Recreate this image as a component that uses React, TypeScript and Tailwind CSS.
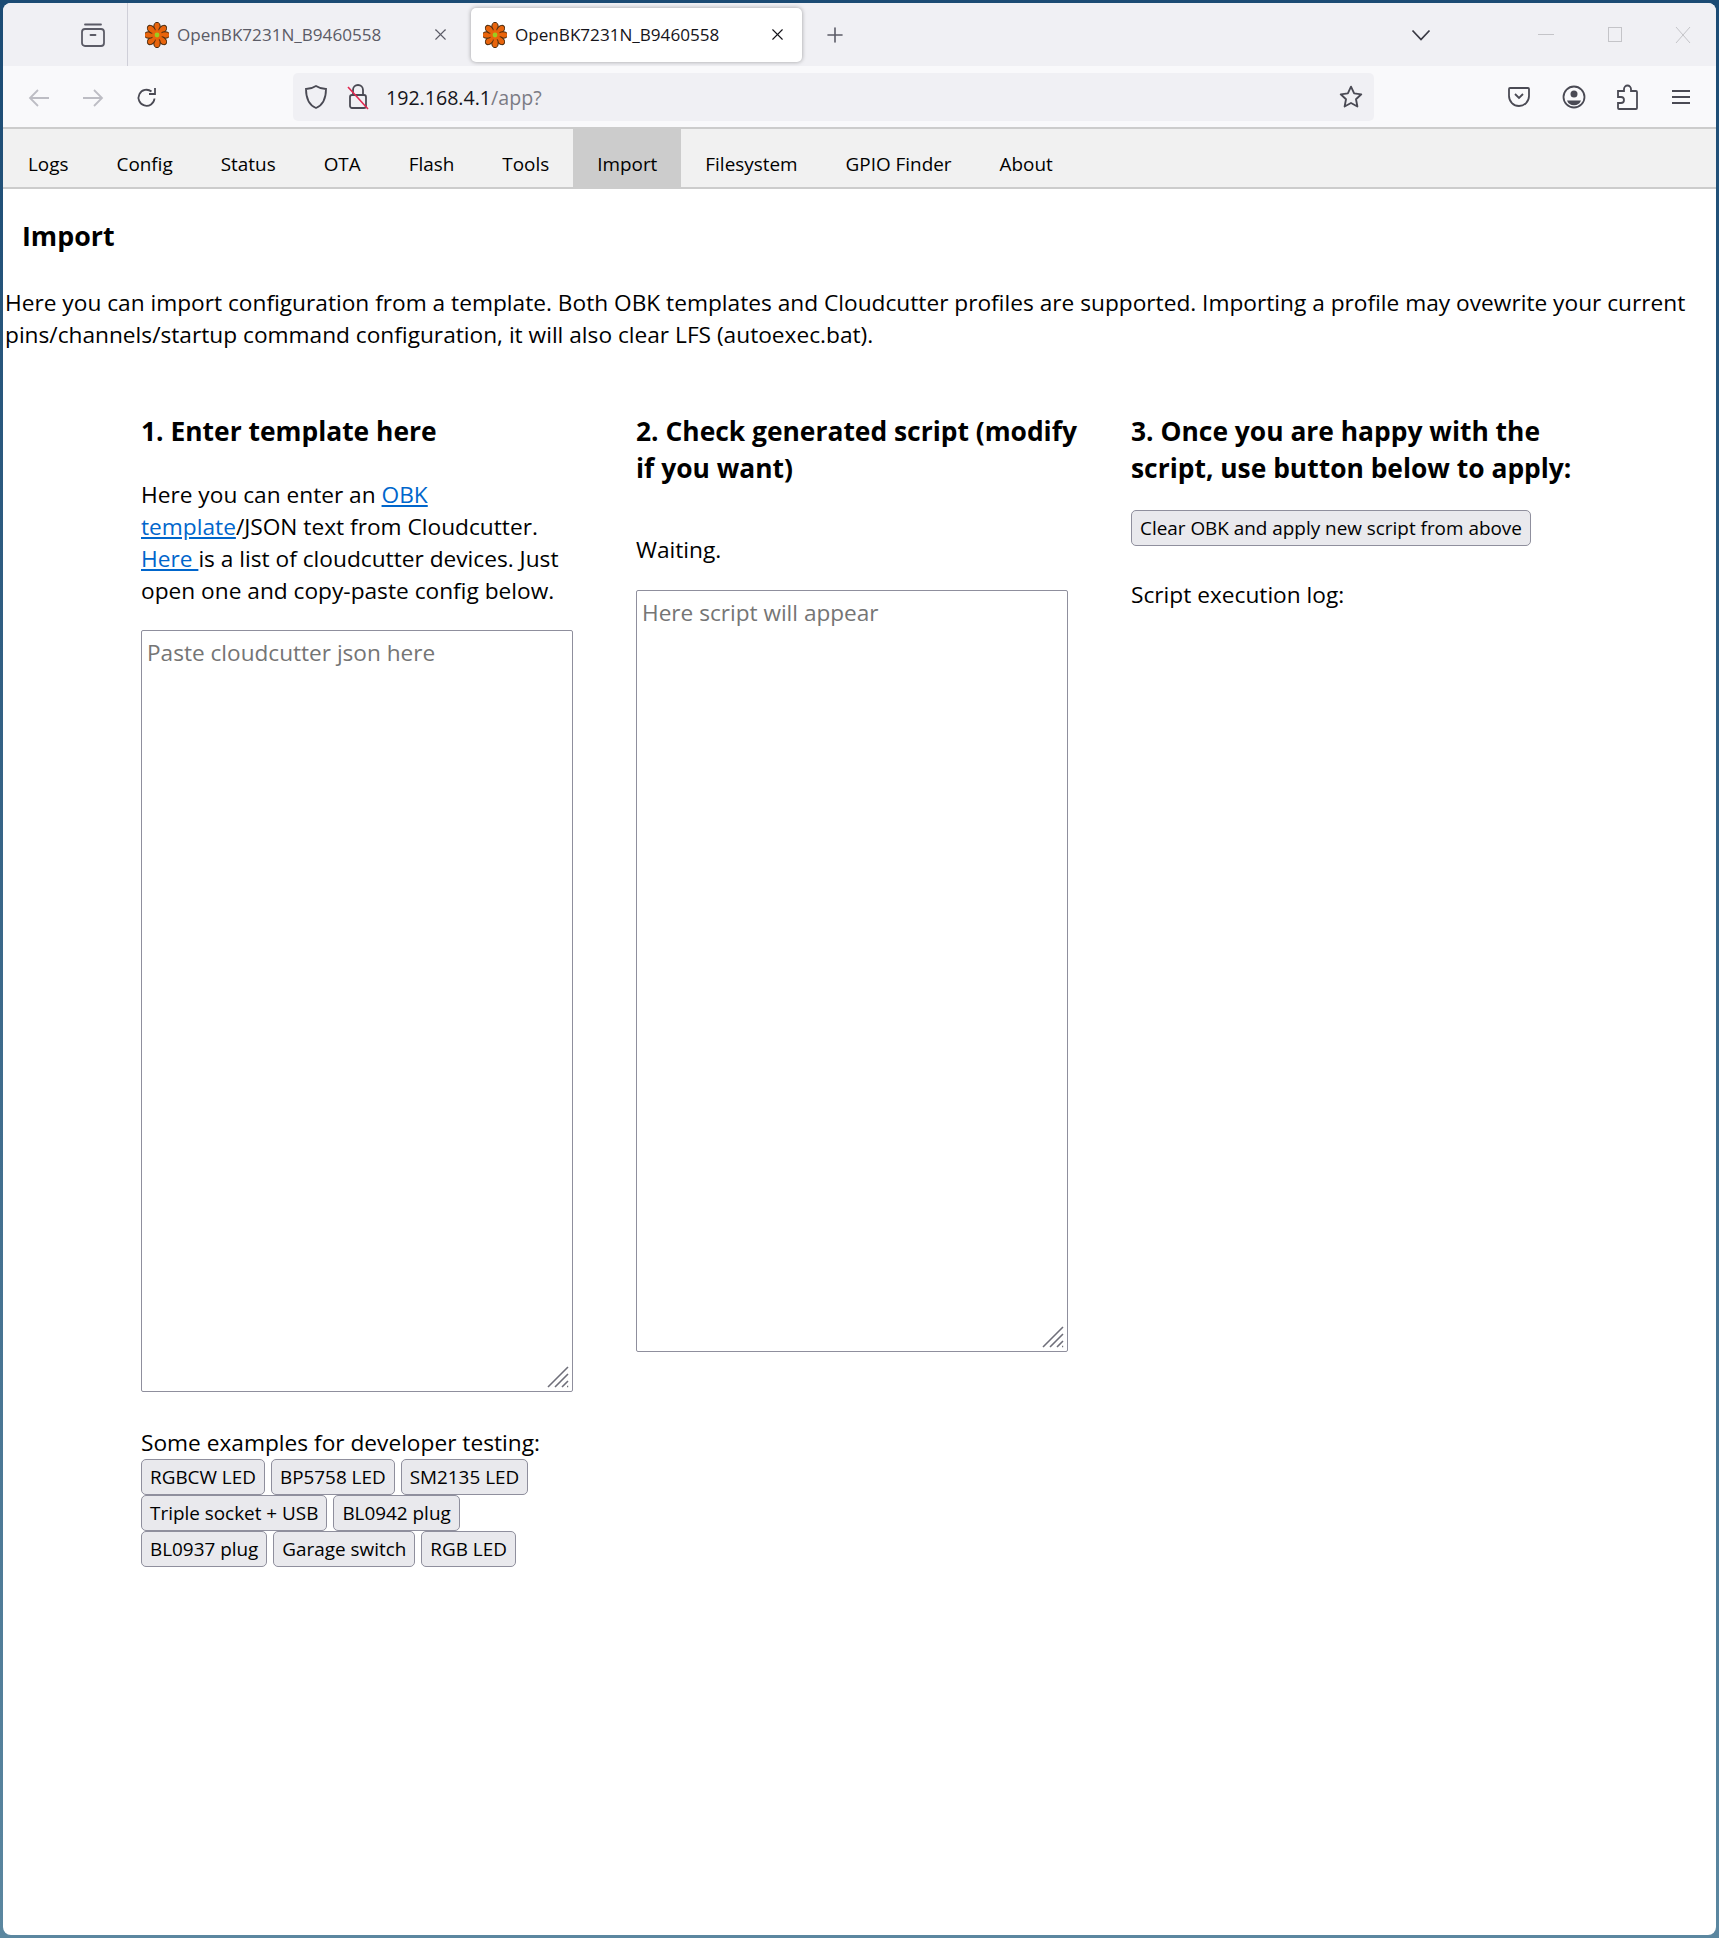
import { Plus, X } from "lucide-react";

const FONT = "font-['Open_Sans','Noto_Sans',sans-serif]";

function Favicon() {
  const petals = [0, 45, 90, 135, 180, 225, 270, 315];
  return (
    <svg width="24" height="26" viewBox="0 0 24 26" className="shrink-0">
      <g transform="translate(12 13)">
        {petals.map((a) => (
          <ellipse key={a} cx="0" cy="-8" rx="3.2" ry="4.6" fill="#e8640c" stroke="#4a2c10" strokeWidth="1" transform={`rotate(${a})`} />
        ))}
        <circle r="5" fill="#e8640c" />
        <circle r="2.4" fill="#9ccc20" />
      </g>
    </svg>
  );
}

function Tab({ active }: { active?: boolean }) {
  return (
    <div
      className={
        active
          ? "flex h-[54px] w-[331px] items-center rounded-[5px] bg-white pl-[12px] pr-[15px] text-[#15141a] shadow-[0_0_4px_rgba(0,0,0,0.35)]"
          : "flex h-[54px] w-[343px] items-center pl-[17px] pr-[21px] text-[#5b5b66]"
      }
    >
      <Favicon />
      <span className="ml-[8px] flex-1 whitespace-nowrap text-[17.1px]">OpenBK7231N_B9460558</span>
      <X size={19} strokeWidth={1.4} className={active ? "text-[#15141a]" : "text-[#5b5b66]"} />
    </div>
  );
}

function BrowserBar() {
  return (
    <div className={`${FONT} shrink-0`}>
      <div className="flex h-[63px] items-center bg-[#f0f0f4] pl-[124px]">
        <div className="absolute left-[77px] top-[19px]">
          <svg width="26" height="26" viewBox="0 0 26 26" fill="none" stroke="#5b5b66" strokeWidth="1.8">
            <path d="M5 2.5h16" strokeLinecap="round" />
            <rect x="2" y="7" width="22" height="17" rx="3" />
            <path d="M10.5 13h5" strokeLinecap="round" />
          </svg>
        </div>
        <div className="h-[63px] w-px bg-[#cfcfd8]" />
        <Tab />
        <Tab active />
        <Plus size={24} strokeWidth={1.6} className="ml-[21px] text-[#5b5b66]" />
        <div className="flex-1" />
        <svg width="20" height="12" viewBox="0 0 20 12" fill="none" stroke="#3a3a44" strokeWidth="1.8" className="mr-[107px]">
          <path d="M1.5 1.5 10 10.5 18.5 1.5" />
        </svg>
        <div className="mr-[54px] h-px w-[16px] bg-[#c4c4c8]" />
        <div className="mr-[51px] h-[15px] w-[14px] border border-[#c4c4c8]" />
        <svg width="20" height="20" viewBox="0 0 20 20" stroke="#c4c4c8" strokeWidth="1" className="mr-[23px]">
          <path d="M3 2 17 18M17 2 3 18" />
        </svg>
      </div>
      <div className="flex h-[61px] items-center bg-[#f9f9fb] pl-[24px]">
        <svg width="24" height="22" viewBox="0 0 24 22" fill="none" stroke="#bdbdc4" strokeWidth="1.8" className="mt-[2px]">
          <path d="M22 11H3M11 3 3 11l8 8" />
        </svg>
        <svg width="24" height="22" viewBox="0 0 24 22" fill="none" stroke="#bdbdc4" strokeWidth="1.8" className="ml-[30px] mt-[2px]">
          <path d="M2 11h19M13 3l8 8-8 8" />
        </svg>
        <svg width="24" height="24" viewBox="0 0 24 24" fill="none" stroke="#4a4a54" strokeWidth="1.8" className="ml-[30px] mt-[2px]">
          <path d="M19.5 12.5a8 8 0 1 1-3-7M20 2v6h-6" />
        </svg>
        <div className="ml-[134px] flex h-[48px] w-[1081px] items-center rounded-[5px] bg-[#f0f0f4] pl-[11px] pr-[10px]">
          <svg width="24" height="26" viewBox="0 0 24 26" fill="none" stroke="#4a4a54" strokeWidth="1.8">
            <path d="M12 2c3 2 6 3 10 3 0 9-3 16-10 19C5 21 2 14 2 5c4 0 7-1 10-3z" />
          </svg>
          <svg width="24" height="28" viewBox="0 0 24 28" fill="none" strokeWidth="1.8" className="ml-[18px]">
            <path d="M7 12V7a5 5 0 0 1 10 0v5" stroke="#4a4a54" />
            <rect x="4" y="12" width="16" height="13" rx="2" stroke="#4a4a54" />
            <path d="M2 4 22 26" stroke="#e22850" strokeWidth="1.6" />
          </svg>
          <span className="ml-[16px] whitespace-nowrap pt-[2px] text-[19.6px] text-[#15141a]">
            192.168.4.1<span className="text-[#7b7b84]">/app?</span>
          </span>
          <div className="flex-1" />
          <svg width="26" height="26" viewBox="0 0 24 24" fill="none" stroke="#4a4a54" strokeWidth="1.7" strokeLinejoin="round">
            <path d="M12 2.5l2.9 6.2 6.6.8-4.9 4.6 1.3 6.7L12 17.5l-5.9 3.3 1.3-6.7L2.5 9.5l6.6-.8z" />
          </svg>
        </div>
        <div className="flex-1" />
        <svg width="24" height="24" viewBox="0 0 24 24" fill="none" stroke="#4a4a54" strokeWidth="1.8" className="mr-[31px]">
          <path d="M3 3h18a1 1 0 0 1 1 1v7a10 10 0 0 1-20 0V4a1 1 0 0 1 1-1z" />
          <path d="M8 9l4 4 4-4" />
        </svg>
        <svg width="24" height="24" viewBox="0 0 24 24" className="mr-[30px]">
          <circle cx="12" cy="12" r="10.5" fill="none" stroke="#4a4a54" strokeWidth="1.8" />
          <circle cx="12" cy="9" r="3.5" fill="#4a4a54" />
          <path d="M5 15.5h14a7.5 7.5 0 0 1-14 0z" fill="#4a4a54" />
        </svg>
        <svg width="24" height="26" viewBox="0 0 24 26" fill="none" stroke="#4a4a54" strokeWidth="1.8" className="mr-[31px]">
          <path d="M2 10V7h6V5a3.5 3.5 0 0 1 7 0v2h5a1 1 0 0 1 1 1v16a1 1 0 0 1-1 1H3a1 1 0 0 1-1-1v-5h3a3 3 0 0 0 0-6H2z" />
        </svg>
        <svg width="20" height="16" viewBox="0 0 20 16" stroke="#4a4a54" strokeWidth="1.8" className="mr-[25px]">
          <path d="M1 2h18M1 8h18M1 14h18" />
        </svg>
      </div>
      <div className="h-[2px] bg-[#cccccc]" />
    </div>
  );
}

const NAV = ["Logs", "Config", "Status", "OTA", "Flash", "Tools", "Import", "Filesystem", "GPIO Finder", "About"];

function Nav() {
  return (
    <div className="flex h-[60px] border-b-2 border-[#cccccc] bg-[#f1f1f1] pl-[1px]">
      {NAV.map((n) => (
        <div key={n} className={n === "Import" ? "flex items-center bg-[#cccccc] px-[24px] pt-[12px]" : "flex items-center px-[24px] pt-[12px]"}>
          {n}
        </div>
      ))}
    </div>
  );
}

function Btn({ label, wide }: { label: string; wide?: boolean }) {
  return (
    <button className={`${wide ? "" : "mr-[6px]"} h-[36px] rounded-[5px] border border-[#8f8f9d] bg-[#e9e9ed] px-[8px] text-[18.9px] leading-none text-black`}>
      {label}
    </button>
  );
}

function Area({ placeholder, className }: { placeholder: string; className: string }) {
  return (
    <div className={`${className} relative w-[432px]`}>
      <textarea
        readOnly
        placeholder={placeholder}
        className="block h-full w-full resize-none rounded-[2px] border border-[#8f8f9d] bg-white px-[5px] pb-[5px] pt-[6px] text-[22.6px] leading-[32px] outline-none placeholder:text-[#757575]"
      />
      <svg width="22" height="22" viewBox="0 0 22 22" stroke="#6f6f7a" strokeWidth="1.6" className="absolute bottom-[4px] right-[4px]">
        <path d="M1 21 21 1M8 21 21 8M15 21l6-6" />
        <path d="M20 20.5h1.2" />
      </svg>
    </div>
  );
}

export default function App() {
  return (
    <div className="flex h-[1938px] w-[1719px] flex-col bg-gradient-to-b from-[#1b4b74] to-[#5b87a0] px-[3px] pb-[3px] pt-[3px]">
      <div className={`${FONT} relative flex flex-1 flex-col overflow-hidden rounded-[8px] bg-white text-black`}>
        <BrowserBar />
        <div className="text-[18.9px]">
          <Nav />
        </div>
        <div className="text-[22.7px] leading-[32px]">
          <h1 className="ml-[19px] mt-[29px] text-[26.8px] font-bold leading-[36px]">Import</h1>
          <p className="mt-[33px] pl-[2px]">
            Here you can import configuration from a template. Both OBK templates and Cloudcutter profiles are supported. Importing a profile may ovewrite your current pins/channels/startup command configuration, it will also clear LFS (autoexec.bat).
          </p>
          <div className="mt-[62px] flex pl-[138px]">
            <div className="w-[495px] pr-[50px]">
              <h2 className="mb-[29px] text-[26.4px] font-bold leading-[37px]">1. Enter template here</h2>
              <p className="w-[445px]">
                Here you can enter an <a className="text-[#0066cc] underline">OBK template</a>/JSON text from Cloudcutter. <a className="text-[#0066cc] underline">Here </a>is a list of cloudcutter devices. Just open one and copy-paste config below.
              </p>
              <Area placeholder="Paste cloudcutter json here" className="mt-[23px] h-[762px]" />
              <p className="mt-[35px]">Some examples for developer testing:</p>
              <div className="flex flex-col">
                <div className="flex"><Btn label="RGBCW LED" /><Btn label="BP5758 LED" /><Btn label="SM2135 LED" /></div>
                <div className="flex"><Btn label="Triple socket + USB" /><Btn label="BL0942 plug" /></div>
                <div className="flex"><Btn label="BL0937 plug" /><Btn label="Garage switch" /><Btn label="RGB LED" /></div>
              </div>
            </div>
            <div className="w-[495px]">
              <h2 className="w-[450px] text-[26.4px] font-bold leading-[37px]">2. Check generated script (modify if you want)</h2>
              <p className="mt-[47px]">Waiting.</p>
              <Area placeholder="Here script will appear" className="mt-[24px] h-[762px]" />
            </div>
            <div className="w-[450px]">
              <h2 className="text-[26.4px] font-bold leading-[37px]">3. Once you are happy with the script, use button below to apply:</h2>
              <div className="mt-[23px]"><Btn wide label="Clear OBK and apply new script from above" /></div>
              <p className="mt-[33px]">Script execution log:</p>
            </div>
          </div>
        </div>
      </div>
    </div>
  );
}
